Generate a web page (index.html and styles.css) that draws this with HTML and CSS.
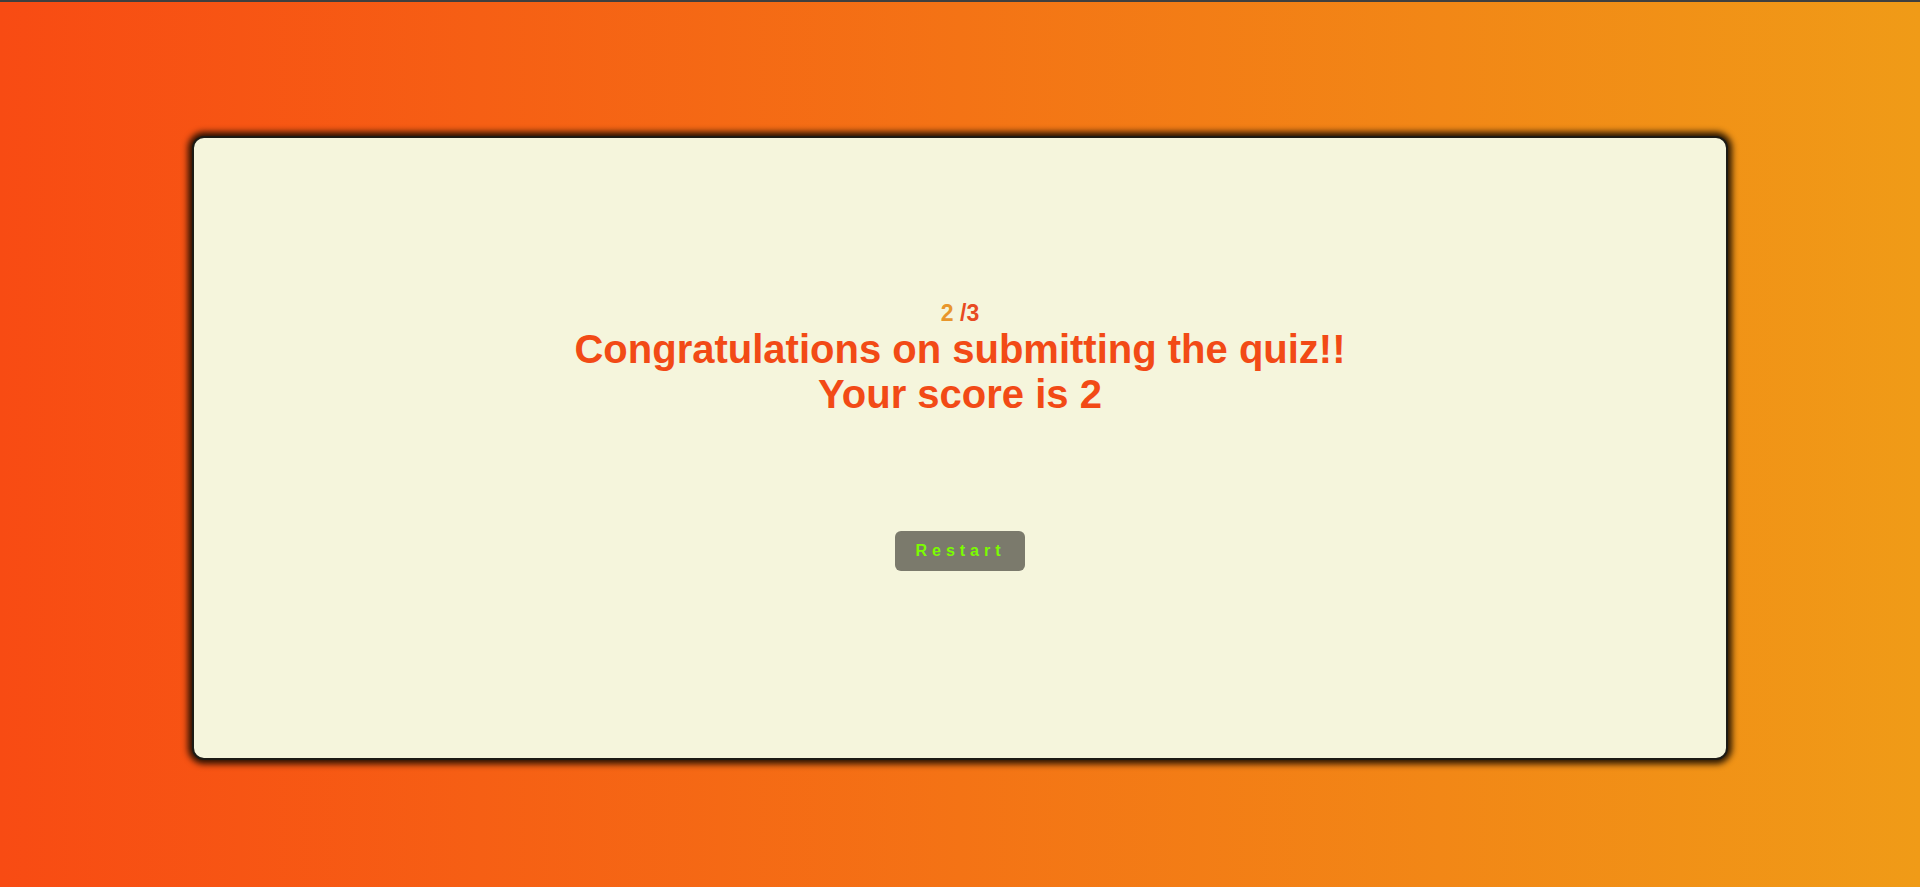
FILE: index.html
```html
<!DOCTYPE html>
<html lang="en">
<head>
<meta charset="utf-8">
<title>Quiz</title>
<link rel="stylesheet" href="styles.css">
</head>
<body>
  <main class="card">
    <div class="score"><span class="score-num">2</span> <span class="score-total">/3</span></div>
    <h1 class="result">Congratulations on submitting the quiz!!<br>Your score is 2</h1>
    <button class="restart" type="button">Restart</button>
  </main>
</body>
</html>
```

FILE: styles.css
```css
html, body {
  margin: 0;
  padding: 0;
}

body {
  min-height: 100vh;
  box-sizing: border-box;
  border-top: 2px solid #3f3f3f;
  background: linear-gradient(to right, #f84b13 0%, #f09b17 100%);
  font-family: "Liberation Sans", Arial, sans-serif;
  display: flex;
  flex-direction: column;
  align-items: center;
}

.card {
  width: 1536px;
  height: 624px;
  margin-top: 134px;
  box-sizing: border-box;
  background: #f5f5dc;
  border: 2px solid #1c1a14;
  border-radius: 12px;
  box-shadow: 0 0 6px 4px rgba(20, 10, 0, 0.9);
  display: flex;
  flex-direction: column;
  align-items: center;
  padding-top: 162px;
}

.score {
  font-size: 23px;
  font-weight: bold;
  line-height: 27px;
}

.score-num {
  color: #e8962c;
}

.score-total {
  color: #e84a22;
}

.result {
  margin: 0;
  font-size: 40px;
  font-weight: bold;
  line-height: 45px;
  color: #f24a16;
  text-align: center;
}

.restart {
  margin-top: 114px;
  height: 40px;
  padding: 0 19px 0 20px;
  border: none;
  border-radius: 6px;
  background: #7b7a6c;
  color: #7cfc00;
  font-family: "Liberation Sans", Arial, sans-serif;
  font-size: 16px;
  font-weight: bold;
  letter-spacing: 5px;
}
```
